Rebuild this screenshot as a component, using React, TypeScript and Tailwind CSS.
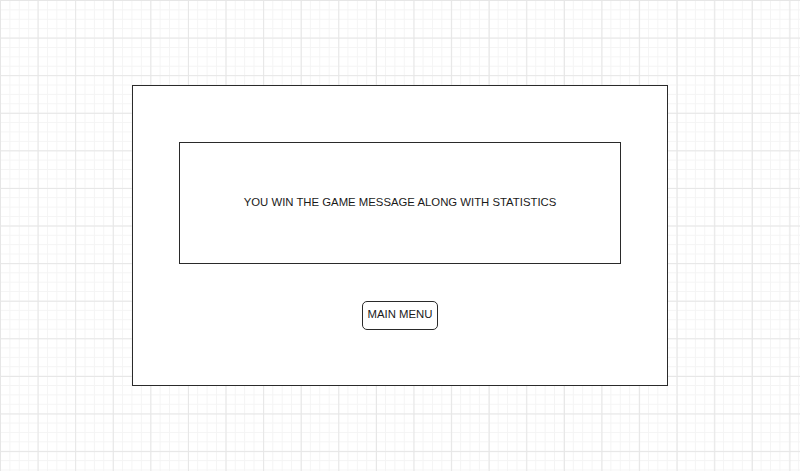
export default function App() {
  return (
    <div
      className="w-[800px] h-[471px] bg-white overflow-hidden pt-[85px] pl-[132px] bg-[linear-gradient(to_right,#e6e6e6_1px,transparent_1px),linear-gradient(to_bottom,#e6e6e6_1px,transparent_1px),linear-gradient(to_right,#f4f4f4_1px,transparent_1px),linear-gradient(to_bottom,#f4f4f4_1px,transparent_1px)] bg-[size:37.6px_37.6px,37.6px_37.6px,9.4px_9.4px,9.4px_9.4px]"
      style={{ fontFamily: '"Liberation Sans", Arial, sans-serif' }}
    >
      <div className="w-[536px] h-[301px] bg-white border-[1.5px] border-[#2a2a2a] flex flex-col items-center pt-[55.5px]">
        <div className="w-[442px] h-[122px] border border-[#2a2a2a] flex items-center justify-center">
          <span className="text-[11.35px] text-[#1a1a1a]">
            YOU WIN THE GAME MESSAGE ALONG WITH STATISTICS
          </span>
        </div>
        <div className="mt-[37px] w-[76px] h-[29px] border border-[#2a2a2a] rounded-[5px] flex items-center justify-center">
          <span className="text-[11.35px] text-[#1a1a1a]">MAIN MENU</span>
        </div>
      </div>
    </div>
  );
}
